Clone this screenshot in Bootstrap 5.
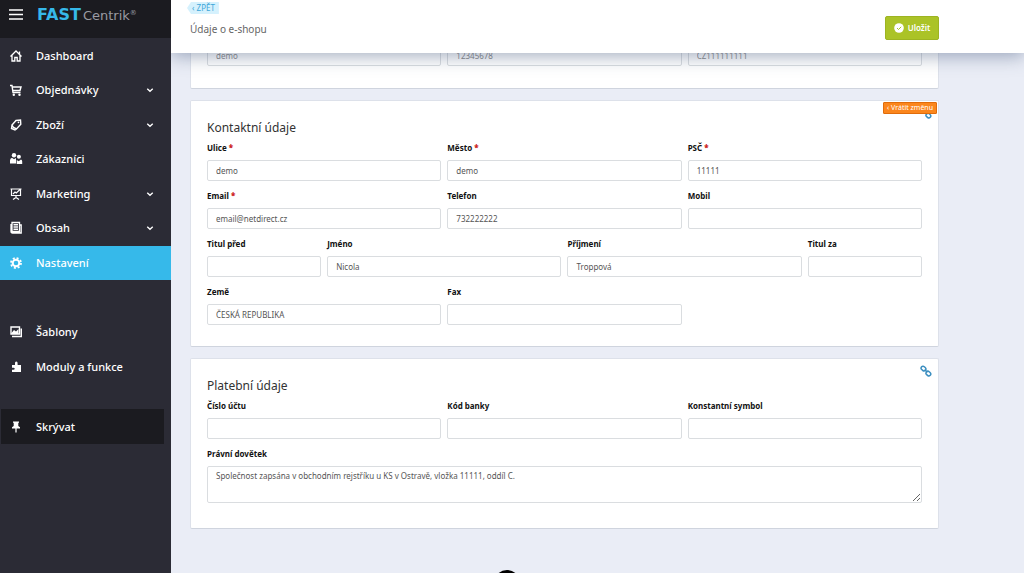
<!DOCTYPE html>
<html lang="cs">
<head>
<meta charset="utf-8">
<meta name="viewport" content="width=device-width, initial-scale=1">
<title>Údaje o e-shopu</title>
<link href="https://cdn.jsdelivr.net/npm/bootstrap@5.3.0/dist/css/bootstrap.min.css" rel="stylesheet">
<style>
body{font-family:"Noto Sans","Open Sans",sans-serif;font-size:8px;line-height:12px;color:#555;background:#eaedf6}
svg{display:block;flex:none}
.side{width:171px;background:#2b2b35;font-size:11px;line-height:16px;font-weight:500}
.side-top{height:38px;background:#1b1b20;padding:0 10px 8px 9px;margin-bottom:1px}
.burger{border:0;background:none;padding:0}
.logo{margin-left:14px;font-family:"DejaVu Sans",sans-serif;font-size:13px;line-height:20px;font-weight:400;color:#9a9aa2;text-decoration:none}
.logo strong{font-size:16px;color:#36b9ea;margin-right:2px}
.logo sup{font-size:7px;top:-5px;line-height:8px}
.side a.item{height:34px;padding:0 16px 0 9px;color:#fff;text-decoration:none}
.side a.item:nth-of-type(even){margin-bottom:1px}
.side a.item>svg:first-child{margin-right:13px}
.side a.active-item{background:#36b9ea}
.side a.pin-item{background:#1b1b20;margin:25px 7px 0 1px;height:35px;padding-left:8px}
.gap-row{height:35px}
.topbar{height:53px;z-index:2;background:#fff;box-shadow:0 3px 18px rgba(70,90,125,.5);padding:0 85px 0 19px}
.back{margin-left:-3px;margin-top:2px;height:12px;padding:0 4px 0 5px;background:#d5f1fd;color:#3ea6d8;font-size:8px;line-height:11px;text-decoration:none;clip-path:polygon(4px 0,100% 0,100% 100%,4px 100%,0 50%)}
.page-title{font-size:10px;line-height:14px;margin:8px 0 0;font-weight:400;color:#666}
.save{background:#abc327;border:1px solid #9db422;border-radius:2px;color:#fff;font-size:8px;font-weight:600;line-height:12px;height:24px;width:54px;margin-top:16px;padding:0}
.content{padding:0 85px 46px 19px}
.panel{background:#fff;border:1px solid #dde1ea;border-bottom-color:#cfd4de;border-radius:2px;padding:19px 16px 12px;margin-bottom:11px;position:relative}
.panel.first{border-top:0;padding:0 16px 22px}
.panel:last-child{padding-bottom:16px}
.first .row{margin-top:-8px}
.first .form-control{color:#888}
.panel h2{font-size:12px;line-height:16px;font-weight:400;color:#333;margin:0 0 6px}
.row{--bs-gutter-x:6px}
.field{margin-bottom:9px}
label{display:block;font-weight:700;color:#111;font-size:8px;line-height:12px;margin-bottom:6px}
label b{color:#c22}
.form-control{height:21px;min-height:0;border:1px solid #dadde0;border-radius:2px;padding:0 8px;font-size:8px;line-height:12px;color:#555}
textarea.form-control{height:37px;min-height:0;padding:3px 8px;resize:vertical}
.undo{position:absolute;top:1px;right:1px;height:12px;border:1px solid #e06c0a;background:#fb861c;border-radius:1px;color:#fff;font-size:7px;line-height:10px;padding:0 3px;z-index:1}
.chain{position:absolute;top:6px;right:6px}
.help{position:absolute;width:26px;height:26px;border-radius:50%;border:0;padding:0;background:#000;bottom:-23px;left:calc(50% - 104px)}
</style>
</head>
<body>
<svg width="0" height="0" class="position-absolute" aria-hidden="true">
<symbol id="chev" viewBox="0 0 8 8"><path d="M1.800 3 4 5l2.200-2" fill="none" stroke="#fff" stroke-width="1.100"/></symbol>
<symbol id="link" viewBox="0 0 12 12"><g fill="none" stroke="#3c8fc0" stroke-width="1.500"><rect x="1" y="1.800" width="5" height="3.800" rx="1.900" transform="rotate(42 3.700 3.600)"/><rect x="6" y="6.500" width="5" height="3.800" rx="1.900" transform="rotate(42 8.200 8.300)"/><path d="m4.600 4.600 2.800 2.600"/></g></symbol>
</svg>
<div class="d-flex vh-100 overflow-hidden">
<nav class="side flex-shrink-0">
<div class="side-top d-flex align-items-center">
<button class="burger" aria-label="Menu"><svg width="14" height="12" viewBox="0 0 14 12"><path d="M0 1h14M0 5.500h14M0 10h14" stroke="#fff" stroke-width="1.500"/></svg></button>
<div class="logo text-nowrap"><strong>FAST</strong>Centrik<sup>®</sup></div>
</div>
<a class="item d-flex align-items-center" href="#"><svg width="14" height="14" viewBox="0 0 14 14"><path d="M1.500 7.500 7 2l5.500 5.500M3 6.500V12h2.800V8.500h2.400V12H11V6.500M10.500 2.500v2.500" fill="none" stroke="#fff" stroke-width="1.300"/></svg><span class="flex-grow-1">Dashboard</span></a>
<a class="item d-flex align-items-center" href="#"><svg width="14" height="14" viewBox="0 0 14 14"><path d="M1 2.500h2l1 7h7.500M3.200 4H12l-1 3.500H3.700" fill="none" stroke="#fff" stroke-width="1.400"/><circle cx="4.800" cy="11.700" r="1.200" fill="#fff"/><circle cx="10.500" cy="11.700" r="1.200" fill="#fff"/></svg><span class="flex-grow-1">Objednávky</span><svg width="10" height="10"><use href="#chev"/></svg></a>
<a class="item d-flex align-items-center" href="#"><svg width="14" height="14" viewBox="0 0 14 14"><path d="m3 7 4-4.500 4.500-.5.300 4.200L7.500 11 4.500 9.500zM3 7l-.5 3.500L6 12l1.500-1" fill="none" stroke="#fff" stroke-width="1.400"/><circle cx="9.500" cy="4.300" r=".9" fill="#fff"/></svg><span class="flex-grow-1">Zboží</span><svg width="10" height="10"><use href="#chev"/></svg></a>
<a class="item d-flex align-items-center" href="#"><svg width="14" height="14" viewBox="0 0 14 14" fill="#fff"><circle cx="5" cy="3.300" r="2.200"/><path d="M1 11.500V8.500q0-2 2-2.700l2 1.500L7 6v5.500z"/><circle cx="9.900" cy="4.800" r="2"/><path d="M7.700 12V8l2 1.300L12 7.400q1.200.5 1.200 2V12z"/></svg><span class="flex-grow-1">Zákazníci</span></a>
<a class="item d-flex align-items-center" href="#"><svg width="14" height="14" viewBox="0 0 14 14"><path d="M1.500 2h11M2.500 2v6.500h9V2M7 8.500v2.500M4 12.500 7 10.500l3 2M4 7l2-2 1.300 1L11 2.500" fill="none" stroke="#fff" stroke-width="1.200"/></svg><span class="flex-grow-1">Marketing</span><svg width="10" height="10"><use href="#chev"/></svg></a>
<a class="item d-flex align-items-center" href="#"><svg width="14" height="14" viewBox="0 0 14 14"><path d="M3 1.500h7.500v9H3zM10.500 4h1.700v8H3.500Q2 12 2 10.500V3" fill="none" stroke="#fff" stroke-width="1.300"/><path d="M4.500 3.800H9M4.500 6H9M4.500 8.200H9" stroke="#fff" stroke-width="1.400"/></svg><span class="flex-grow-1">Obsah</span><svg width="10" height="10"><use href="#chev"/></svg></a>
<a class="item active-item d-flex align-items-center" href="#" aria-current="page"><svg width="14" height="14" viewBox="0 0 14 14" fill="none" stroke="#fff"><circle cx="7" cy="7" r="3.300" stroke-width="2"/><circle cx="7" cy="7" r="5" stroke-width="1.800" stroke-dasharray="2 1.930"/></svg><span class="flex-grow-1">Nastavení</span></a>
<div class="gap-row"></div>
<a class="item d-flex align-items-center" href="#"><svg width="14" height="14" viewBox="0 0 14 14"><path d="M2 2h8.500v7H2zM12.300 3.500v8H3" fill="none" stroke="#fff" stroke-width="1.400"/><path d="m2.500 8 2.500-3 2 1.500L9.500 4v5h-7z" fill="#fff"/></svg><span class="flex-grow-1">Šablony</span></a>
<a class="item d-flex align-items-center" href="#"><svg width="14" height="14" viewBox="0 0 14 14"><path d="M6 5V3.500Q5.800 1.500 7.300 1.500T8.600 3.500V5H12v7H3V9.800h1.500q1.200 0 1.200-1T4.500 7.800H3V5z" fill="#fff"/></svg><span class="flex-grow-1">Moduly a funkce</span></a>
<a class="item pin-item d-flex align-items-center" href="#"><svg width="14" height="14" viewBox="0 0 14 14"><path d="M4 1.500h6v1.300H9.300V6l1.700 1.300V8.500H7.600V12.500H6.400V8.500H3V7.300L4.700 6V2.800H4z" fill="#fff"/></svg><span class="flex-grow-1">Skrývat</span></a>
</nav>
<main class="flex-grow-1 position-relative overflow-hidden">
<header class="topbar d-flex justify-content-between align-items-start position-relative">
<div><a class="back d-table" href="#">‹ ZPĚT</a><h1 class="page-title">Údaje o e-shopu</h1></div>
<button class="save d-flex align-items-center justify-content-center gap-1"><svg width="10" height="10" viewBox="0 0 10 10"><circle cx="5" cy="5" r="4.800" fill="#fff"/><path d="m3 5 1.500 1.500L7.200 3.800" fill="none" stroke="#abc327"/></svg>Uložit</button>
</header>
<form class="content">
<section class="panel first"><div class="row">
<div class="col-4"><input class="form-control" aria-label="Firma" value="demo"></div>
<div class="col-4"><input class="form-control" aria-label="IČ" value="12345678"></div>
<div class="col-4"><input class="form-control" aria-label="DIČ" value="CZ111111111"></div>
</div></section>
<section class="panel"><button type="button" class="undo">‹ Vrátit změnu</button><a class="chain" href="#" aria-label="Odkaz"><svg width="12" height="12"><use href="#link"/></svg></a>
<h2>Kontaktní údaje</h2>
<div class="row">
<div class="col-4 field"><label for="f1">Ulice <b>*</b></label><input id="f1" class="form-control" value="demo"></div>
<div class="col-4 field"><label for="f2">Město <b>*</b></label><input id="f2" class="form-control" value="demo"></div>
<div class="col-4 field"><label for="f3">PSČ <b>*</b></label><input id="f3" class="form-control" value="11111"></div>
<div class="col-4 field"><label for="f4">Email <b>*</b></label><input id="f4" class="form-control" value="email@netdirect.cz"></div>
<div class="col-4 field"><label for="f5">Telefon</label><input id="f5" class="form-control" value="732222222"></div>
<div class="col-4 field"><label for="f6">Mobil</label><input id="f6" class="form-control"></div>
<div class="col-2 field"><label for="f7">Titul před</label><input id="f7" class="form-control"></div>
<div class="col-4 field"><label for="f8">Jméno</label><input id="f8" class="form-control" value="Nicola"></div>
<div class="col-4 field"><label for="f9">Příjmení</label><input id="f9" class="form-control" value="Troppová"></div>
<div class="col-2 field"><label for="f10">Titul za</label><input id="f10" class="form-control"></div>
<div class="col-4 field"><label for="f11">Země</label><input id="f11" class="form-control" value="ČESKÁ REPUBLIKA"></div>
<div class="col-4 field"><label for="f12">Fax</label><input id="f12" class="form-control"></div>
</div></section>
<section class="panel"><a class="chain" href="#" aria-label="Odkaz"><svg width="12" height="12"><use href="#link"/></svg></a>
<h2>Platební údaje</h2>
<div class="row">
<div class="col-4 field"><label for="p1">Číslo účtu</label><input id="p1" class="form-control"></div>
<div class="col-4 field"><label for="p2">Kód banky</label><input id="p2" class="form-control"></div>
<div class="col-4 field"><label for="p3">Konstantní symbol</label><input id="p3" class="form-control"></div>
<div class="col-12 field"><label for="p4">Právní dovětek</label><textarea id="p4" class="form-control">Společnost zapsána v obchodním rejstříku u KS v Ostravě, vložka 11111, oddíl C.</textarea></div>
</div></section>
</form>
<button class="help" aria-label="Nápověda"></button>
</main>
</div>
<script src="https://cdn.jsdelivr.net/npm/bootstrap@5.3.0/dist/js/bootstrap.bundle.min.js"></script>
</body>
</html>
